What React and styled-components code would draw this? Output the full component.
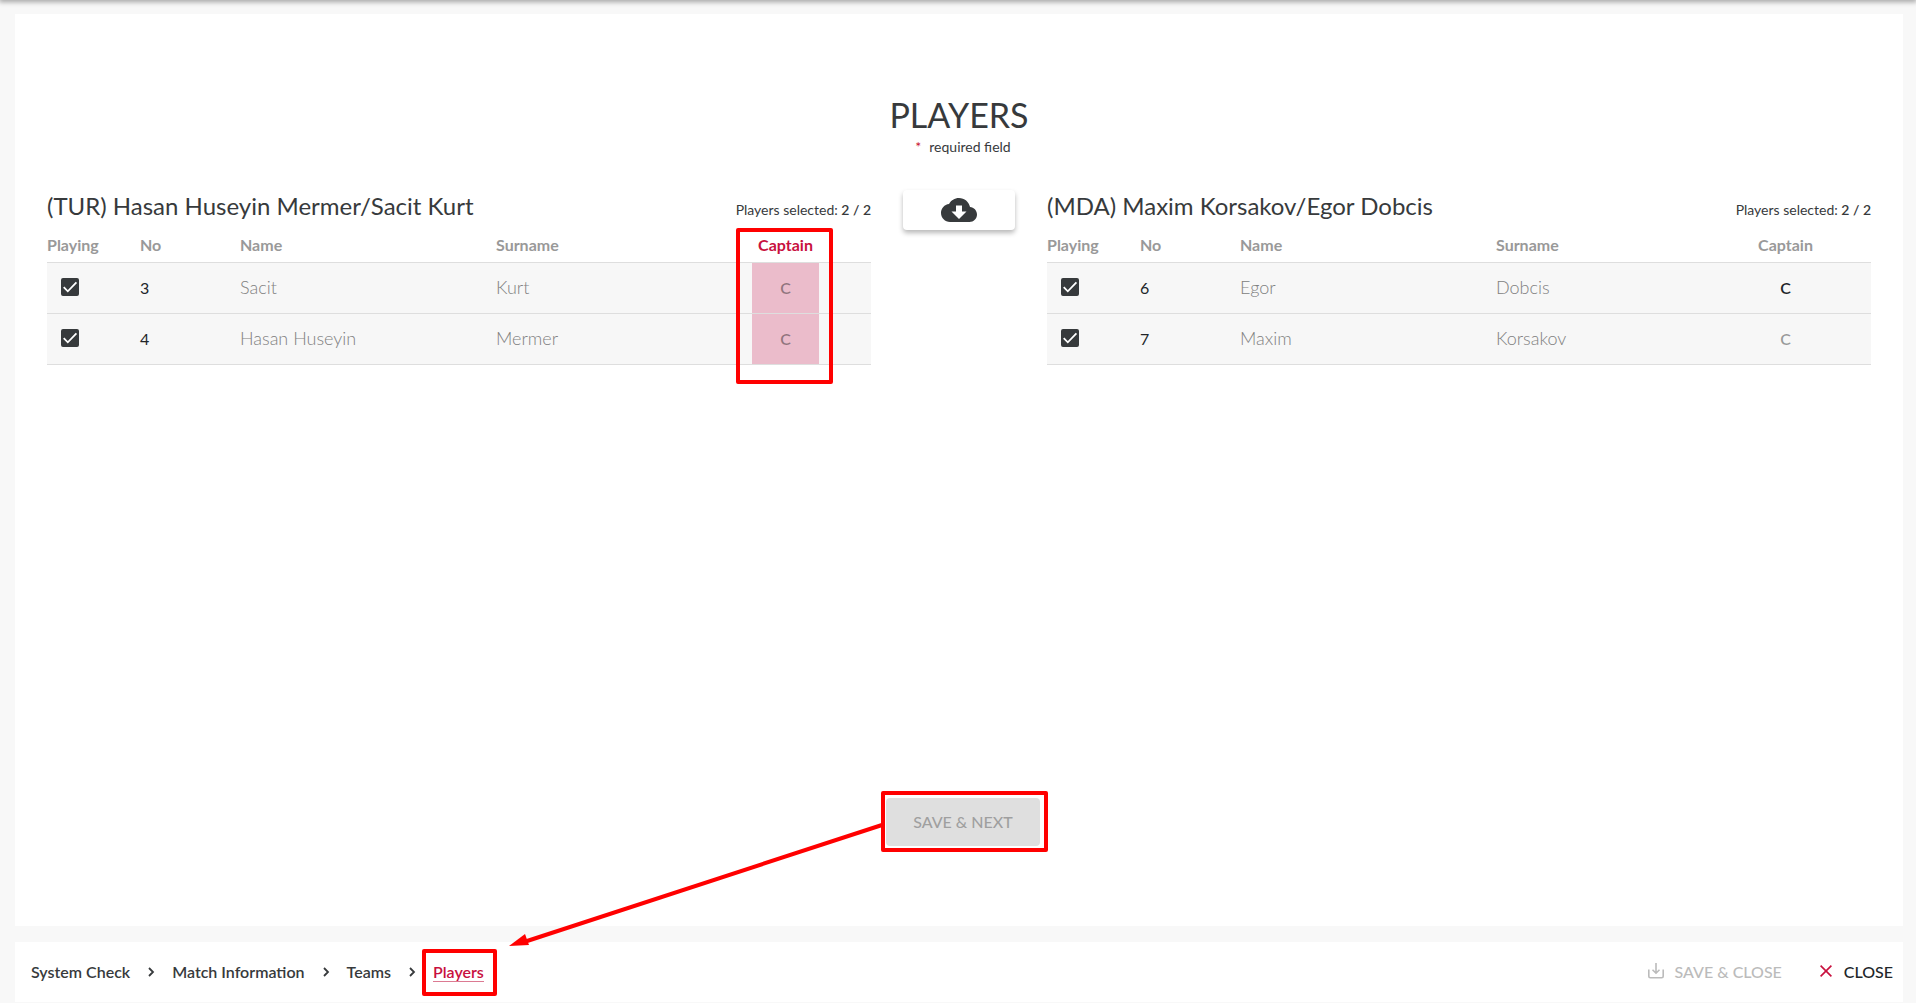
import React, { useState } from 'react';
import styled, { createGlobalStyle } from 'styled-components';

const GlobalStyle = createGlobalStyle`
  * {
    box-sizing: border-box;
  }

  body {
    margin: 0;
    background-color: #f8f8f8;
    color: #373a3c;
    font-family: Lato, sans-serif;
    font-size: 16px;
  }
`;

const Page = styled.div`
  position: relative;
  display: flex;
  flex-direction: column;
  gap: 16px;
  min-height: 100vh;
  padding: 14px 13px 1px 15px;
  overflow: hidden;

  &::before {
    content: '';
    position: absolute;
    top: -4px;
    left: 0;
    right: 0;
    height: 4px;
    box-shadow: 0 1px 5px 1px rgba(0, 0, 0, 0.35);
  }
`;

const Panel = styled.main`
  display: flex;
  flex: 1;
  flex-direction: column;
  padding: 80px 32px;
  background-color: #fff;
`;

const Heading = styled.header`
  text-align: center;
`;

const Title = styled.h1`
  margin: 0;
  font-size: 34px;
  font-weight: 400;
  line-height: 42px;
`;

const Required = styled.p`
  margin: 0;
  padding: 2px 0 0 8px;
  font-size: 14px;
  line-height: 18px;
`;

const Star = styled.span`
  margin-right: 8px;
  color: #c8102e;
`;

const Teams = styled.div`
  display: grid;
  grid-template-columns: 1fr 112px 1fr;
  gap: 32px;
  align-items: start;
  margin-top: 34px;
`;

const DownloadButton = styled.button`
  display: flex;
  align-items: center;
  justify-content: center;
  height: 40px;
  padding: 0;
  border: 0;
  border-radius: 4px;
  background-color: #fff;
  color: #373a3c;
  box-shadow: 0 3px 5px rgba(0, 0, 0, 0.28);
  cursor: pointer;
`;

const TeamHeader = styled.div`
  display: flex;
  align-items: baseline;
  justify-content: space-between;
  height: 39px;
`;

const TeamName = styled.h2`
  margin: 0;
  font-size: 24px;
  font-weight: 400;
  line-height: 32px;
`;

const Selected = styled.span`
  font-size: 14px;
`;

const Count = styled.span`
  font-weight: 600;
`;

const PlayersTable = styled.table`
  width: 100%;
  border-collapse: collapse;
  table-layout: fixed;
`;

const Col = styled.col`
  width: ${({ $width }) => $width};
`;

const Th = styled.th`
  position: relative;
  height: 33px;
  padding: 0 0 1px;
  border-bottom: 1px solid #dedede;
  color: ${({ $invalid }) => ($invalid ? '#c8103e' : '#999')};
  font-size: 16px;
  font-weight: 700;
  text-align: ${({ $center }) => ($center ? 'center' : 'left')};
`;

const Row = styled.tr`
  height: 51px;
  border-bottom: 1px solid #dedede;
  background-color: #f7f7f7;
`;

const Td = styled.td`
  padding: 0 0 1px;
  color: ${({ $muted }) => ($muted ? '#808080' : '#212529')};
  font-size: ${({ $muted }) => ($muted ? '18px' : '16px')};
  font-weight: ${({ $muted }) => ($muted ? 300 : 400)};
`;

const CaptainCell = styled.td`
  height: 50px;
  padding: 0;
  background-color: ${({ $invalid }) => ($invalid ? '#ebbccb' : 'transparent')};
`;

const CaptainButton = styled.button`
  display: block;
  width: 100%;
  height: 50px;
  padding: 0;
  border: 0;
  background: none;
  color: ${({ $active }) => ($active ? '#212529' : 'rgba(0, 0, 0, 0.4)')};
  font: 600 16px Lato, sans-serif;
  cursor: pointer;
`;

const Checkbox = styled.input`
  display: block;
  width: 18px;
  height: 18px;
  margin: 0 0 0 14px;
  border: 2px solid #373a3c;
  border-radius: 2px;
  appearance: none;
  cursor: pointer;

  &:checked {
    background: #373a3c
      url("data:image/svg+xml,%3Csvg xmlns='http://www.w3.org/2000/svg' viewBox='0 0 18 18'%3E%3Cpath d='M2.7 9.2l4.1 4.1 8.6-8.9' fill='none' stroke='white' stroke-width='1.8'/%3E%3C/svg%3E")
      center / 18px 18px no-repeat;
  }
`;

const NextArea = styled.div`
  display: flex;
  justify-content: center;
  margin-top: auto;
  padding-left: 8px;
`;

const Anchor = styled.span`
  position: relative;
  display: inline-block;
`;

const NextButton = styled.button`
  display: block;
  width: 154px;
  height: 48px;
  padding: 0 0 2px;
  border: 0;
  border-radius: 4px;
  background-color: #dfdfdf;
  color: #9f9f9f;
  font: 500 16px Lato, sans-serif;
`;

const Mark = styled.span`
  position: absolute;
  inset: ${({ $inset }) => $inset};
  z-index: 1;
  border: 4px solid #f00;
  border-radius: 2px;
  pointer-events: none;
`;

const Arrow = styled.svg`
  position: absolute;
  top: 24px;
  right: 100%;
  width: 378px;
  height: 126px;
  pointer-events: none;
`;

const Footer = styled.footer`
  display: flex;
  align-items: center;
  justify-content: space-between;
  height: 60px;
  padding: 0 10px 0 16px;
  background-color: #fff;
`;

const Crumbs = styled.nav`
  display: flex;
  align-items: center;
`;

const Crumb = styled.a`
  color: ${({ $current }) => ($current ? '#c8103e' : '#373a3c')};
  font-weight: 600;
  line-height: 20px;
  text-decoration: none;
  border-bottom: 1px solid ${({ $current }) => ($current ? '#dc7a92' : 'transparent')};
`;

const Separator = styled.svg`
  width: 8px;
  height: 12px;
  margin: 0 17px;
`;

const Actions = styled.div`
  display: flex;
  gap: 38px;
  padding-bottom: 2px;
`;

const ActionButton = styled.button`
  display: flex;
  align-items: center;
  gap: ${({ $gap }) => $gap};
  padding: 0;
  border: 0;
  background: none;
  color: #212529;
  font: 500 16px Lato, sans-serif;
  cursor: pointer;

  &:disabled {
    color: #bbb;
    cursor: default;
  }
`;

const teams = [
  {
    id: 'tur',
    name: '(TUR) Hasan Huseyin Mermer/Sacit Kurt',
    captain: null,
    players: [
      { no: 3, name: 'Sacit', surname: 'Kurt' },
      { no: 4, name: 'Hasan Huseyin', surname: 'Mermer' },
    ],
  },
  {
    id: 'mda',
    name: '(MDA) Maxim Korsakov/Egor Dobcis',
    captain: 6,
    players: [
      { no: 6, name: 'Egor', surname: 'Dobcis' },
      { no: 7, name: 'Maxim', surname: 'Korsakov' },
    ],
  },
];

const steps = ['System Check', 'Match Information', 'Teams', 'Players'];

function CloudDownloadIcon() {
  return (
    <svg width="36" height="36" viewBox="0 0 24 24" fill="currentColor" aria-hidden="true">
      <path d="M19.35 10.04C18.67 6.59 15.64 4 12 4 9.11 4 6.6 5.64 5.35 8.04 2.34 8.36 0 10.91 0 14c0 3.31 2.69 6 6 6h13c2.76 0 5-2.24 5-5 0-2.64-2.05-4.78-4.65-4.96zM17 13l-5 5-5-5h3V9h4v4h3z" />
    </svg>
  );
}

function SaveIcon() {
  return (
    <svg width="16" height="16" viewBox="0 0 16 16" fill="none" stroke="currentColor" strokeWidth="1.6" aria-hidden="true">
      <path d="M8 0v10M4.5 6.8L8 10.2l3.5-3.4M.8 6.5v6.7c0 1 .5 1.5 1.5 1.5h11.4c1 0 1.5-.5 1.5-1.5V6.5" />
    </svg>
  );
}

function CloseIcon() {
  return (
    <svg width="12" height="12" viewBox="0 0 12 12" fill="none" stroke="#c8103e" strokeWidth="1.6" aria-hidden="true">
      <path d="M.6.6l10.8 10.8M11.4.6L.6 11.4" />
    </svg>
  );
}

function Team({ team }) {
  const [captain, setCaptain] = useState(team.captain);
  const [playing, setPlaying] = useState(team.players.map((player) => player.no));
  const invalid = captain === null;

  const toggle = (no) =>
    setPlaying(playing.includes(no) ? playing.filter((item) => item !== no) : [...playing, no]);

  const rows = team.players.map((player) => (
    <Row key={player.no}>
      <Td>
        <Checkbox
          type="checkbox"
          aria-label={`${player.name} ${player.surname}`}
          checked={playing.includes(player.no)}
          onChange={() => toggle(player.no)}
        />
      </Td>
      <Td>{player.no}</Td>
      <Td $muted>{player.name}</Td>
      <Td $muted>{player.surname}</Td>
      <CaptainCell $invalid={invalid}>
        <CaptainButton $active={captain === player.no} onClick={() => setCaptain(player.no)}>
          C
        </CaptainButton>
      </CaptainCell>
      <Td />
    </Row>
  ));

  return (
    <section>
      <TeamHeader>
        <TeamName>{team.name}</TeamName>
        <Selected>
          Players selected: <Count>{playing.length} / {team.players.length}</Count>
        </Selected>
      </TeamHeader>
      <PlayersTable>
        <colgroup>
          <Col $width="93px" />
          <Col $width="100px" />
          <Col />
          <Col />
          <Col $width="67px" />
          <Col $width="52px" />
        </colgroup>
        <thead>
          <tr>
            <Th>Playing</Th>
            <Th>No</Th>
            <Th>Name</Th>
            <Th>Surname</Th>
            <Th $center $invalid={invalid}>
              Captain
              {invalid && <Mark $inset="-1px -14px -122px -16px" />}
            </Th>
            <Th as="td" />
          </tr>
        </thead>
        <tbody>{rows}</tbody>
      </PlayersTable>
    </section>
  );
}

export default function App() {
  return (
    <Page>
      <GlobalStyle />
      <Panel>
        <Heading>
          <Title>PLAYERS</Title>
          <Required>
            <Star>*</Star>required field
          </Required>
        </Heading>
        <Teams>
          <Team team={teams[0]} />
          <DownloadButton aria-label="Download players">
            <CloudDownloadIcon />
          </DownloadButton>
          <Team team={teams[1]} />
        </Teams>
        <NextArea>
          <Anchor>
            <NextButton disabled>SAVE &amp; NEXT</NextButton>
            <Mark $inset="-7px -8px -6px -5px" />
            <Arrow viewBox="0 0 378 126" aria-hidden="true">
              <path d="M374 3L16 120" stroke="#f00" strokeWidth="4" />
              <path d="M1 124L17 112L21 123Z" fill="#f00" />
            </Arrow>
          </Anchor>
        </NextArea>
      </Panel>
      <Footer>
        <Crumbs>
          {steps.map((step, index) => (
            <React.Fragment key={step}>
              {index > 0 && (
                <Separator viewBox="0 0 8 12" fill="none" stroke="#373a3c" strokeWidth="1.8">
                  <path d="M2 2l4 4-4 4" />
                </Separator>
              )}
              <Anchor>
                <Crumb href="#" $current={step === 'Players'}>{step}</Crumb>
                {step === 'Players' && <Mark $inset="-13px -13px -14px -11px" />}
              </Anchor>
            </React.Fragment>
          ))}
        </Crumbs>
        <Actions>
          <ActionButton disabled $gap="10px">
            <SaveIcon />
            SAVE &amp; CLOSE
          </ActionButton>
          <ActionButton $gap="12px">
            <CloseIcon />
            CLOSE
          </ActionButton>
        </Actions>
      </Footer>
    </Page>
  );
}
